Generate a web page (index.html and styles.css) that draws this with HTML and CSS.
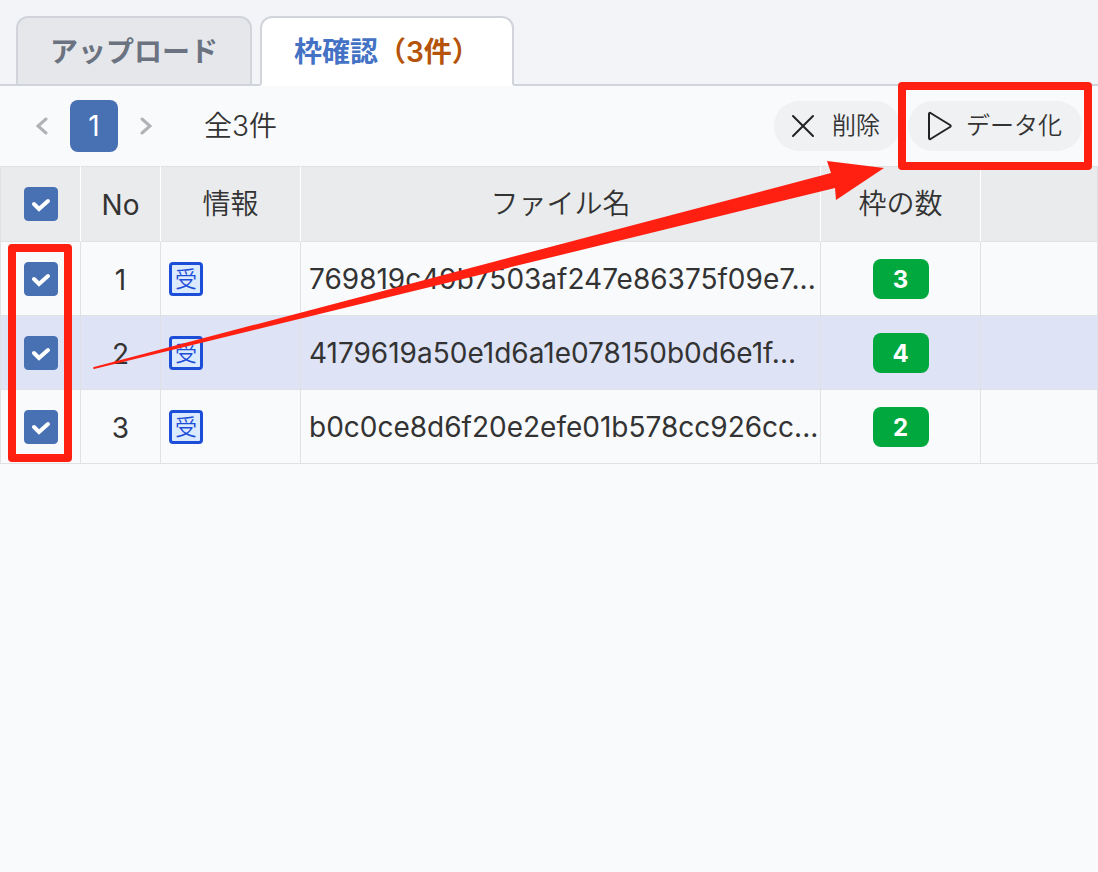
FILE: index.html
```html
<!DOCTYPE html>
<html lang="ja">

<head>
  <meta charset="UTF-8" />
  <meta name="viewport" content="width=device-width, initial-scale=1" />
  <title>枠確認</title>
  <link rel="stylesheet" href="styles.css">
</head>

<body>
  <nav class="tabs">
    <a class="tab" href="#upload">アップロード</a>
    <a class="tab active" href="#frames" aria-current="page">枠確認<span class="count">（3件）</span></a>
  </nav>

  <main>
    <div class="toolbar">
      <div class="pager">
        <button class="pager-arrow" type="button" aria-label="前へ">
          <svg width="12" height="20" viewBox="0 0 12 20"><path d="M10 3L2 10L10 17" /></svg>
        </button>
        <button class="pager-page" type="button" aria-current="page">1</button>
        <button class="pager-arrow" type="button" aria-label="次へ">
          <svg width="12" height="20" viewBox="0 0 12 20"><path d="M2 3L10 10L2 17" /></svg>
        </button>
      </div>
      <span class="total">全3件</span>

      <div class="actions">
        <button class="action" type="button">
          <svg width="24" height="24" viewBox="0 0 24 24"><path d="M1 2L21 22M21 2L1 22" /></svg>
          削除
        </button>
        <div class="marked">
          <button class="action" type="button">
            <svg width="24" height="28" viewBox="0 0 24 28"><path d="M3 2Q3 .5 4.500 1L24 13Q25.500 14 24 15L4.500 27Q3 27.500 3 26Z" /></svg>
            データ化
          </button>
        </div>
      </div>
    </div>

    <div class="table-wrap">
      <table class="files">
        <colgroup>
          <col class="col-check">
          <col class="col-no">
          <col class="col-info">
          <col class="col-name">
          <col class="col-frames">
          <col>
        </colgroup>
        <thead>
          <tr>
            <th><input class="check" type="checkbox" aria-label="すべて選択" checked></th>
            <th class="latin">No</th>
            <th>情報</th>
            <th>ファイル名</th>
            <th>枠の数</th>
            <th></th>
          </tr>
        </thead>
        <tbody>
          <tr>
            <td><input class="check" type="checkbox" aria-label="1を選択" checked></td>
            <td class="latin">1</td>
            <td class="info"><span class="received">受</span></td>
            <td class="name latin">769819c49b7503af247e86375f09e7...</td>
            <td><span class="badge">3</span></td>
            <td></td>
          </tr>
          <tr class="selected">
            <td><input class="check" type="checkbox" aria-label="2を選択" checked></td>
            <td class="latin">2</td>
            <td class="info"><span class="received">受</span></td>
            <td class="name latin">4179619a50e1d6a1e078150b0d6e1f...</td>
            <td><span class="badge">4</span></td>
            <td></td>
          </tr>
          <tr>
            <td><input class="check" type="checkbox" aria-label="3を選択" checked></td>
            <td class="latin">3</td>
            <td class="info"><span class="received">受</span></td>
            <td class="name latin">b0c0ce8d6f20e2efe01b578cc926cc...</td>
            <td><span class="badge">2</span></td>
            <td></td>
          </tr>
        </tbody>
      </table>

      <!-- guide marks -->
      <div class="mark-checks"></div>
      <svg class="mark-arrow" width="792" height="212" viewBox="0 0 792 212" aria-hidden="true">
        <path d="M1 207L738 13L734 1L791 8L743 40L742 28L1 209Q-1 208 1 207Z" />
      </svg>
    </div>
  </main>
</body>

</html>
```

FILE: styles.css
```css
:root {
  --blue: #4871b4;
  --line: #dfe1e4;
  --tab-line: #d1d5db;
  --mark: #ff2012;
}

* {
  margin: 0;
  padding: 0;
  box-sizing: border-box;
}

body {
  background: #f9fafc;
  color: #333;
  font-family: Inter, "Noto Sans CJK JP", sans-serif;
  font-size: 28px;
  font-weight: 350;
  line-height: 40px;
}

button {
  border: none;
  background: none;
  color: inherit;
  font: inherit;
  cursor: pointer;
}

/* Tabs */
.tabs {
  display: flex;
  gap: 8px;
  padding: 16px 16px 0;
  background: #f3f4f8;
  box-shadow: inset 0 -2px 0 var(--tab-line);
}

.tab {
  height: 70px;
  padding: 14px 32px 0;
  border: 2px solid var(--tab-line);
  border-radius: 12px 12px 0 0;
  background: #e5e7eb;
  color: #6b7280;
  font-weight: 600;
  text-decoration: none;
  white-space: nowrap;
}

.tab.active {
  border-bottom-color: #fff;
  background: #fff;
  color: #4472c4;
}

.count {
  color: #b45309;
}

/* Toolbar */
.toolbar {
  display: flex;
  align-items: center;
  height: 80px;
  padding: 0 16px;
}

.pager {
  display: flex;
  align-items: center;
  gap: 2px;
}

.pager-arrow {
  display: flex;
  align-items: center;
  justify-content: center;
  width: 52px;
  height: 52px;
}

.pager-arrow svg {
  fill: none;
  stroke: #b0b2b5;
  stroke-width: 3;
  stroke-linecap: round;
}

.pager-page {
  width: 48px;
  height: 52px;
  border-radius: 8px;
  background: var(--blue);
  color: #fff;
  font-weight: 400;
}

.total {
  margin-left: 32px;
}

.actions {
  display: flex;
  gap: 8px;
  margin-left: auto;
}

.action {
  display: flex;
  align-items: center;
  gap: 16px;
  height: 50px;
  padding: 0 20px 0 18px;
  border-radius: 25px;
  background: #f0f1f3;
  font-size: 24px;
  white-space: nowrap;
}

.action svg {
  overflow: visible;
  fill: none;
  stroke: #222;
  stroke-width: 2;
  stroke-linecap: round;
  stroke-linejoin: round;
}

/* File table */
.table-wrap {
  position: relative;
}

.files {
  width: 100%;
  table-layout: fixed;
  border-collapse: separate;
  border-spacing: 0;
  border-left: 1px solid var(--line);
}

.col-check,
.col-no {
  width: 80px;
}

.col-info {
  width: 140px;
}

.col-name {
  width: 520px;
}

.col-frames {
  width: 160px;
}

.files th,
.files td {
  height: 74px;
  border-right: 1px solid var(--line);
  border-bottom: 1px solid var(--line);
  text-align: center;
  vertical-align: middle;
}

.files th {
  height: 76px;
  border-top: 1px solid var(--line);
  border-right-color: #fff;
  background: #e9ebed;
  font-weight: inherit;
}

.files th:last-child {
  border-right-color: var(--line);
}

.files td.info,
.files td.name {
  padding: 0 8px;
  text-align: left;
}

.files td.name {
  overflow: hidden;
  white-space: nowrap;
}

.files .latin {
  padding-top: 2px;
  font-weight: 400;
}

.selected td {
  background: #dee3f6;
}

.check {
  display: block;
  width: 34px;
  height: 34px;
  margin: 0 auto;
  appearance: none;
  border: 1px solid var(--blue);
  border-radius: 4px;
  background: #fff;
}

.check:checked {
  background: var(--blue) url("data:image/svg+xml,%3Csvg xmlns='http://www.w3.org/2000/svg' viewBox='0 0 32 32'%3E%3Cpath d='M9 16L14 21L23 13' fill='none' stroke='white' stroke-width='4' stroke-linecap='round'/%3E%3C/svg%3E") center / 32px no-repeat;
}

.received {
  display: block;
  width: 34px;
  height: 34px;
  border: 3px solid #1d4ed8;
  border-radius: 4px;
  background: #dbeafe;
  color: #1d4ed8;
  font-size: 22px;
  line-height: 28px;
  text-align: center;
}

.badge {
  display: block;
  width: 56px;
  height: 40px;
  margin: 0 auto;
  border-radius: 8px;
  background: #00a83e;
  color: #fff;
  font-size: 24px;
  font-weight: 700;
  line-height: 42px;
}

/* Guide marks */
.marked {
  position: relative;
  z-index: 1;
}

.marked::after {
  content: "";
  position: absolute;
  inset: -19px -10px;
  border: 8px solid var(--mark);
  border-radius: 4px;
  pointer-events: none;
}

.mark-checks {
  position: absolute;
  top: 78px;
  left: 8px;
  width: 64px;
  height: 218px;
  border: 8px solid var(--mark);
  border-radius: 4px;
  pointer-events: none;
}

.mark-arrow {
  position: absolute;
  top: -6px;
  left: 93px;
  fill: var(--mark);
  pointer-events: none;
}
```
